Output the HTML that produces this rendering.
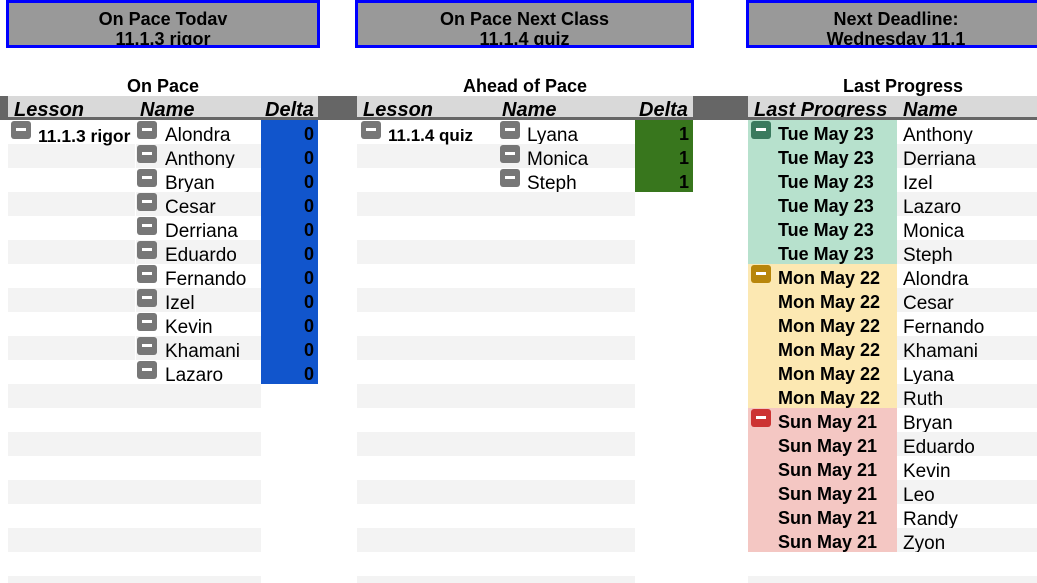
<!DOCTYPE html>
<html><head><meta charset="utf-8"><style>
*{margin:0;padding:0;box-sizing:border-box}
body{width:1037px;height:583px;overflow:hidden;background:#fff;font-family:"Liberation Sans",Arial,sans-serif;position:relative;color:#000}
.a{position:absolute}
.box{position:absolute;top:0;height:48px;background:#999;border:3px solid #0000ff;text-align:center;font-weight:bold;font-size:18px;line-height:20px;padding-top:6px;overflow:hidden}
.title{position:absolute;top:76px;font-weight:bold;font-size:18px;text-align:center}
.hdr{position:absolute;top:96px;height:24px;background:#d9d9d9;border-bottom:3px solid #666;font-weight:bold;font-style:italic;font-size:20px;line-height:29px;overflow:hidden}
.dark{position:absolute;top:96px;height:24px;background:#666}
.zebra{position:absolute;top:120px;bottom:0;background:repeating-linear-gradient(to bottom,#fff 0 24px,#f3f3f3 24px 48px)}
.col{position:absolute;top:120px}
.col div{height:24px;line-height:31px;font-size:19px;white-space:nowrap;overflow:hidden}
.num div{text-align:right;font-weight:bold;font-size:18px;padding-right:4px;line-height:29px}
.date div{font-weight:bold;font-size:18px;line-height:29px;padding-left:30px}
.m{position:absolute;width:20px;height:18px;border-radius:3px;background:#777}
.m::after{content:"";position:absolute;left:5px;right:5px;top:7px;height:3px;background:#fff}
</style></head><body>
<div class="box" style="left:6px;width:314px">On Pace Todav<br>11.1.3 rigor</div>
<div class="box" style="left:355px;width:339px">On Pace Next Class<br>11.1.4 quiz</div>
<div class="box" style="left:746px;width:300px">Next Deadline:<br>Wednesday 11.1</div>

<div class="title" style="left:8px;width:310px">On Pace</div>
<div class="title" style="left:357px;width:336px">Ahead of Pace</div>
<div class="title" style="left:748px;width:310px">Last Progress</div>

<div class="dark" style="left:0;width:8px"></div>
<div class="dark" style="left:318px;width:39px"></div>
<div class="dark" style="left:693px;width:55px"></div>
<div class="hdr" style="left:8px;width:310px"><span class="a" style="left:6px">Lesson</span><span class="a" style="left:132px">Name</span><span class="a" style="left:257px">Delta</span></div>
<div class="hdr" style="left:357px;width:336px"><span class="a" style="left:6px">Lesson</span><span class="a" style="left:145px">Name</span><span class="a" style="left:282px">Delta</span></div>
<div class="hdr" style="left:748px;width:289px"><span class="a" style="left:6px">Last Progress</span><span class="a" style="left:155px">Name</span></div>
<div class="a" style="left:0;top:117px;width:1037px;height:3px;background:#666"></div>

<div class="zebra" style="left:8px;width:253px"></div>
<div class="a" style="left:135px;top:120px;width:1px;height:264px;background:#fff"></div>
<div class="zebra" style="left:357px;width:278px"></div>
<div class="zebra" style="left:897px;width:140px"></div>
<div class="zebra" style="left:748px;width:149px"></div>

<div class="a" style="left:261px;top:120px;width:57px;height:264px;background:#1155cc"></div>
<div class="a" style="left:635px;top:120px;width:58px;height:72px;background:#38761d"></div>
<div class="a" style="left:748px;top:120px;width:149px;height:144px;background:#b7e1cd"></div>
<div class="a" style="left:748px;top:264px;width:149px;height:144px;background:#fce8b2"></div>
<div class="a" style="left:748px;top:408px;width:149px;height:144px;background:#f4c7c3"></div>

<div class="m" style="left:11px;top:121px"></div>
<div class="a" style="left:38px;top:126px;font-weight:bold;font-size:17.5px">11.1.3 rigor</div>
<div class="m" style="left:137px;top:121px"></div><div class="m" style="left:137px;top:145px"></div><div class="m" style="left:137px;top:169px"></div><div class="m" style="left:137px;top:193px"></div><div class="m" style="left:137px;top:217px"></div><div class="m" style="left:137px;top:241px"></div><div class="m" style="left:137px;top:265px"></div><div class="m" style="left:137px;top:289px"></div><div class="m" style="left:137px;top:313px"></div><div class="m" style="left:137px;top:337px"></div><div class="m" style="left:137px;top:361px"></div>
<div class="col" style="left:165px;width:96px"><div>Alondra</div><div>Anthony</div><div>Bryan</div><div>Cesar</div><div>Derriana</div><div>Eduardo</div><div>Fernando</div><div>Izel</div><div>Kevin</div><div>Khamani</div><div>Lazaro</div></div>
<div class="col num" style="left:261px;width:57px"><div>0</div><div>0</div><div>0</div><div>0</div><div>0</div><div>0</div><div>0</div><div>0</div><div>0</div><div>0</div><div>0</div></div>

<div class="m" style="left:361px;top:121px"></div>
<div class="a" style="left:388px;top:126px;font-weight:bold;font-size:17px">11.1.4 quiz</div>
<div class="m" style="left:500px;top:121px"></div><div class="m" style="left:500px;top:145px"></div><div class="m" style="left:500px;top:169px"></div>
<div class="col" style="left:527px;width:108px"><div>Lyana</div><div>Monica</div><div>Steph</div></div>
<div class="col num" style="left:635px;width:58px"><div>1</div><div>1</div><div>1</div></div>

<div class="m" style="left:751px;top:121px;background:#3a7a5e"></div>
<div class="m" style="left:751px;top:265px;background:#b8860b"></div>
<div class="m" style="left:751px;top:409px;background:#cc3333"></div>
<div class="col date" style="left:748px;width:149px"><div>Tue May 23</div><div>Tue May 23</div><div>Tue May 23</div><div>Tue May 23</div><div>Tue May 23</div><div>Tue May 23</div><div>Mon May 22</div><div>Mon May 22</div><div>Mon May 22</div><div>Mon May 22</div><div>Mon May 22</div><div>Mon May 22</div><div>Sun May 21</div><div>Sun May 21</div><div>Sun May 21</div><div>Sun May 21</div><div>Sun May 21</div><div>Sun May 21</div></div>
<div class="col" style="left:903px;width:134px"><div>Anthony</div><div>Derriana</div><div>Izel</div><div>Lazaro</div><div>Monica</div><div>Steph</div><div>Alondra</div><div>Cesar</div><div>Fernando</div><div>Khamani</div><div>Lyana</div><div>Ruth</div><div>Bryan</div><div>Eduardo</div><div>Kevin</div><div>Leo</div><div>Randy</div><div>Zyon</div></div>
</body></html>
